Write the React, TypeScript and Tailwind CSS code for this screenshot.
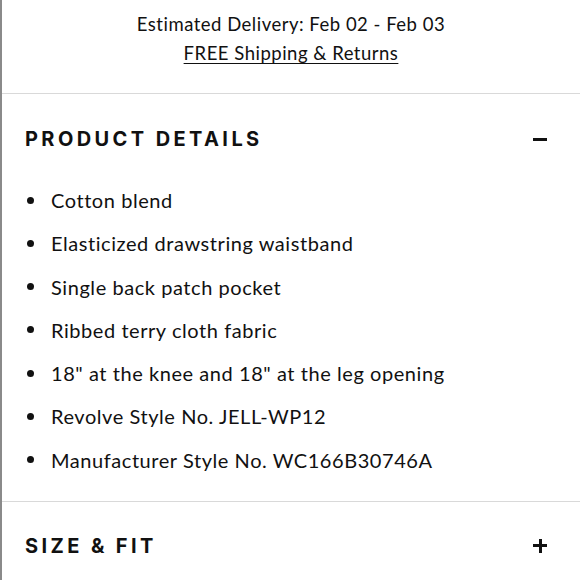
const details = [
  "Cotton blend",
  "Elasticized drawstring waistband",
  "Single back patch pocket",
  "Ribbed terry cloth fabric",
  '18" at the knee and 18" at the leg opening',
  "Revolve Style No. JELL-WP12",
  "Manufacturer Style No. WC166B30746A",
];

export default function App() {
  return (
    <div className="h-[580px] w-[580px] overflow-hidden border-l-2 border-[#8a8a8a] bg-white text-[#111] font-['Lato',sans-serif]">
      <div className="flex flex-col items-center pt-[10px] pb-[25px] text-[18.5px] leading-[29px] tracking-[0.027em]">
        <p>Estimated Delivery: Feb 02 - Feb 03</p>
        <a className="underline underline-offset-[3px]">FREE Shipping &amp; Returns</a>
      </div>

      <div className="border-t border-[#d9d9d9]">
        <div className="flex items-center justify-between pl-[23px] pr-[33px] pt-[30px] pb-[31px]">
          <h2 className="text-[20px] font-bold uppercase leading-[30px] tracking-[0.17em] font-['Inter',sans-serif]">
            Product Details
          </h2>
          <span className="block h-[3px] w-[14px] bg-[#111]" />
        </div>
        <ul className="flex flex-col gap-[13.3px] pl-[25px] pb-[26px] text-[20px] leading-[30px] tracking-[0.028em]">
          {details.map((d) => (
            <li key={d} className="flex items-center gap-[17px]">
              <span className="block h-[7px] w-[7px] rounded-full bg-[#111]" />
              <span>{d}</span>
            </li>
          ))}
        </ul>
      </div>

      <div className="border-t border-[#d9d9d9]">
        <div className="flex items-center justify-between pl-[23px] pr-[33px] pt-[29px] pb-[26px]">
          <h2 className="text-[20px] font-bold uppercase leading-[30px] tracking-[0.17em] font-['Inter',sans-serif]">
            Size &amp; Fit
          </h2>
          <span className="relative block h-[14px] w-[14px]">
            <span className="absolute left-0 top-[5.5px] h-[3px] w-[14px] bg-[#111]" />
            <span className="absolute left-[5.5px] top-0 h-[14px] w-[3px] bg-[#111]" />
          </span>
        </div>
      </div>
    </div>
  );
}
